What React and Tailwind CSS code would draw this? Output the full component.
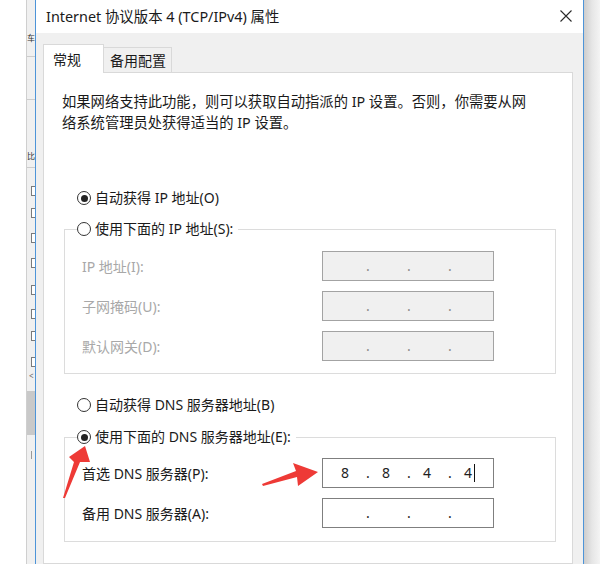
import React from "react";

function Radio({ checked, label, className = "" }) {
  return (
    <div className={"flex items-center h-[20px] " + className}>
      <div className="w-[14px] h-[14px] rounded-full border border-[#333] bg-white flex items-center justify-center shrink-0">
        {checked && <div className="w-[7px] h-[7px] rounded-full bg-[#222]" />}
      </div>
      <span className="ml-[4px] whitespace-nowrap leading-[20px] text-[#1a1a1a]">{label}</span>
    </div>
  );
}

function IpField({ disabled, values = ["", "", "", ""], cursor }) {
  const box = disabled
    ? "border-[#a3a3a3] bg-[#f0f0f0]"
    : "border-[#7f7f7f] bg-white";
  const dot = disabled ? "text-[#8c8c8c]" : "text-[#1e1e1e]";
  return (
    <div className={"w-[172px] h-[30px] border flex items-center pl-[16px] " + box}>
      <span className="w-[12px] text-center text-[#1e1e1e] leading-[20px]">{values[0]}</span>
      <span className={"w-[29px] pl-[15px] leading-[20px] " + dot}>.</span>
      <span className="w-[12px] text-center text-[#1e1e1e] leading-[20px]">{values[1]}</span>
      <span className={"w-[29px] pl-[15px] leading-[20px] " + dot}>.</span>
      <span className="w-[12px] text-center text-[#1e1e1e] leading-[20px]">{values[2]}</span>
      <span className={"w-[29px] pl-[15px] leading-[20px] " + dot}>.</span>
      <span className="w-[12px] text-center text-[#1e1e1e] leading-[20px]">{values[3]}</span>
      {cursor && <span className="w-[1px] h-[18px] bg-[#111]" />}
    </div>
  );
}

function Row({ label, disabled, children }) {
  return (
    <div className="flex items-center h-[30px] ml-[5px]">
      <span
        className={
          "w-[240px] whitespace-nowrap " +
          (disabled ? "text-[#a8a8a8]" : "text-[#1a1a1a]")
        }
      >
        {label}
      </span>
      {children}
    </div>
  );
}

function Check() {
  return <div className="ml-[4px] w-[8px] h-[10px] border border-[#7a7a7a] bg-white" />;
}

export default function App() {
  return (
    <div className="relative w-[600px] h-[564px] overflow-hidden flex bg-white font-['Noto_Sans','Noto_Sans_CJK_SC',sans-serif] text-[14px] text-[#1a1a1a]">
      {/* background window fragment */}
      <div className="w-[26px] bg-white" />
      <div className="w-[1px] bg-[#cfcfcf]" />
      <div className="w-[8px] bg-[#f0f0f0] overflow-hidden flex flex-col">
        <div className="h-[33px]" />
        <div className="h-[10px] leading-[10px] text-[8px] text-[#333]">车</div>
        <div className="h-[14px] border-b border-[#cccccc]" />
        <div className="h-[43px] border-b border-[#cccccc]" />
        <div className="h-[51px]" />
        <div className="h-[10px] leading-[10px] text-[8px] text-[#333]">比</div>
        <div className="h-[7px] border-b border-[#cccccc]" />
        <div className="h-[18px]" />
        <Check />
        <div className="h-[12px]" />
        <Check />
        <div className="h-[15px]" />
        <Check />
        <div className="h-[15px]" />
        <Check />
        <div className="h-[17px]" />
        <Check />
        <div className="h-[14px]" />
        <Check />
        <div className="h-[12px]" />
        <Check />
        <div className="h-[16px]" />
        <Check />
        <div className="h-[4px]" />
        <div className="h-[10px] leading-[10px] text-[8px] text-[#666] pl-[2px]">&lt;</div>
        <div className="h-[10px]" />
        <div className="h-[44px] bg-[#c9c9c9]" />
        <div className="h-[16px]" />
        <div className="h-[8px] ml-[4px] w-[2px] border-l border-[#999]" />
      </div>
      <div className="w-[1px] bg-[#4d94d8]" />

      {/* dialog */}
      <div className="w-[547px] flex flex-col">
        <div className="h-[33px] bg-white flex items-center justify-between pl-[10px] pr-[11px]">
          <span className="whitespace-nowrap text-[14.4px] text-[#1a1a1a]">
            Internet 协议版本 4 (TCP/IPv4) 属性
          </span>
          <svg width="12" height="12" viewBox="0 0 12 12" className="mt-[-2px]">
            <path d="M0.5 0.5 L11.5 11.5 M11.5 0.5 L0.5 11.5" stroke="#2a2a2a" strokeWidth="1.1" fill="none" />
          </svg>
        </div>
        <div className="flex-1 bg-[#f0f0f0] pl-[7px] pr-[10px] pt-[11px] flex flex-col">
          {/* tabs */}
          <div className="flex items-end h-[29px] -mb-px relative z-10">
            <div className="w-[61px] h-[29px] bg-white border border-b-0 border-[#d9d9d9] flex items-center pl-[9px]">
              常规
            </div>
            <div className="w-[68px] h-[26px] bg-[#f0f0f0] border border-l-0 border-[#d9d9d9] flex items-center pl-[6px]">
              备用配置
            </div>
          </div>
          {/* panel */}
          <div className="flex-1 bg-white border border-[#d9d9d9] flex flex-col">
            <p className="pt-[18px] pl-[18px] leading-[21px] whitespace-nowrap text-[14.3px]">
              如果网络支持此功能，则可以获取自动指派的 IP 设置。否则，你需要从网
              <br />
              络系统管理员处获得适当的 IP 设置。
            </p>

            <Radio checked label="自动获得 IP 地址(O)" className="mt-[55px] ml-[33px]" />

            <fieldset className="ml-[20px] w-[492px] mt-[11px] border border-[#dcdcdc] pl-[12px] pt-[12px] pb-[12px] flex flex-col gap-[10px]">
              <legend className="p-0 pr-[5px]">
                <Radio label="使用下面的 IP 地址(S):" />
              </legend>
              <Row label="IP 地址(I):" disabled>
                <IpField disabled />
              </Row>
              <Row label="子网掩码(U):" disabled>
                <IpField disabled />
              </Row>
              <Row label="默认网关(D):" disabled>
                <IpField disabled />
              </Row>
            </fieldset>

            <Radio label="自动获得 DNS 服务器地址(B)" className="mt-[21px] ml-[33px]" />

            <fieldset className="ml-[20px] w-[492px] mt-[12px] border border-[#dcdcdc] pl-[12px] pt-[11px] pb-[13px] flex flex-col gap-[10px]">
              <legend className="p-0 pr-[5px]">
                <Radio checked label="使用下面的 DNS 服务器地址(E):" />
              </legend>
              <Row label="首选 DNS 服务器(P):">
                <IpField values={["8", "8", "4", "4"]} cursor />
              </Row>
              <Row label="备用 DNS 服务器(A):">
                <IpField />
              </Row>
            </fieldset>
          </div>
        </div>
      </div>
      <div className="w-[1px] bg-[#4d94d8]" />
      <div className="flex-1 bg-gradient-to-r from-[#cdcdcd] via-[#e6e6e6] to-[#f4f4f4]" />

      {/* red annotation arrows */}
      <svg className="absolute inset-0 pointer-events-none" width="600" height="564" viewBox="0 0 600 564">
        <polygon
          points="63,498 74,462 69,457 85,446 90,462 80,462 65,498"
          fill="#ee3a36"
        />
        <polygon
          points="262,484 296,471 293,463 318,472 298,486 297,477 263,486"
          fill="#ee3a36"
        />
      </svg>
    </div>
  );
}
